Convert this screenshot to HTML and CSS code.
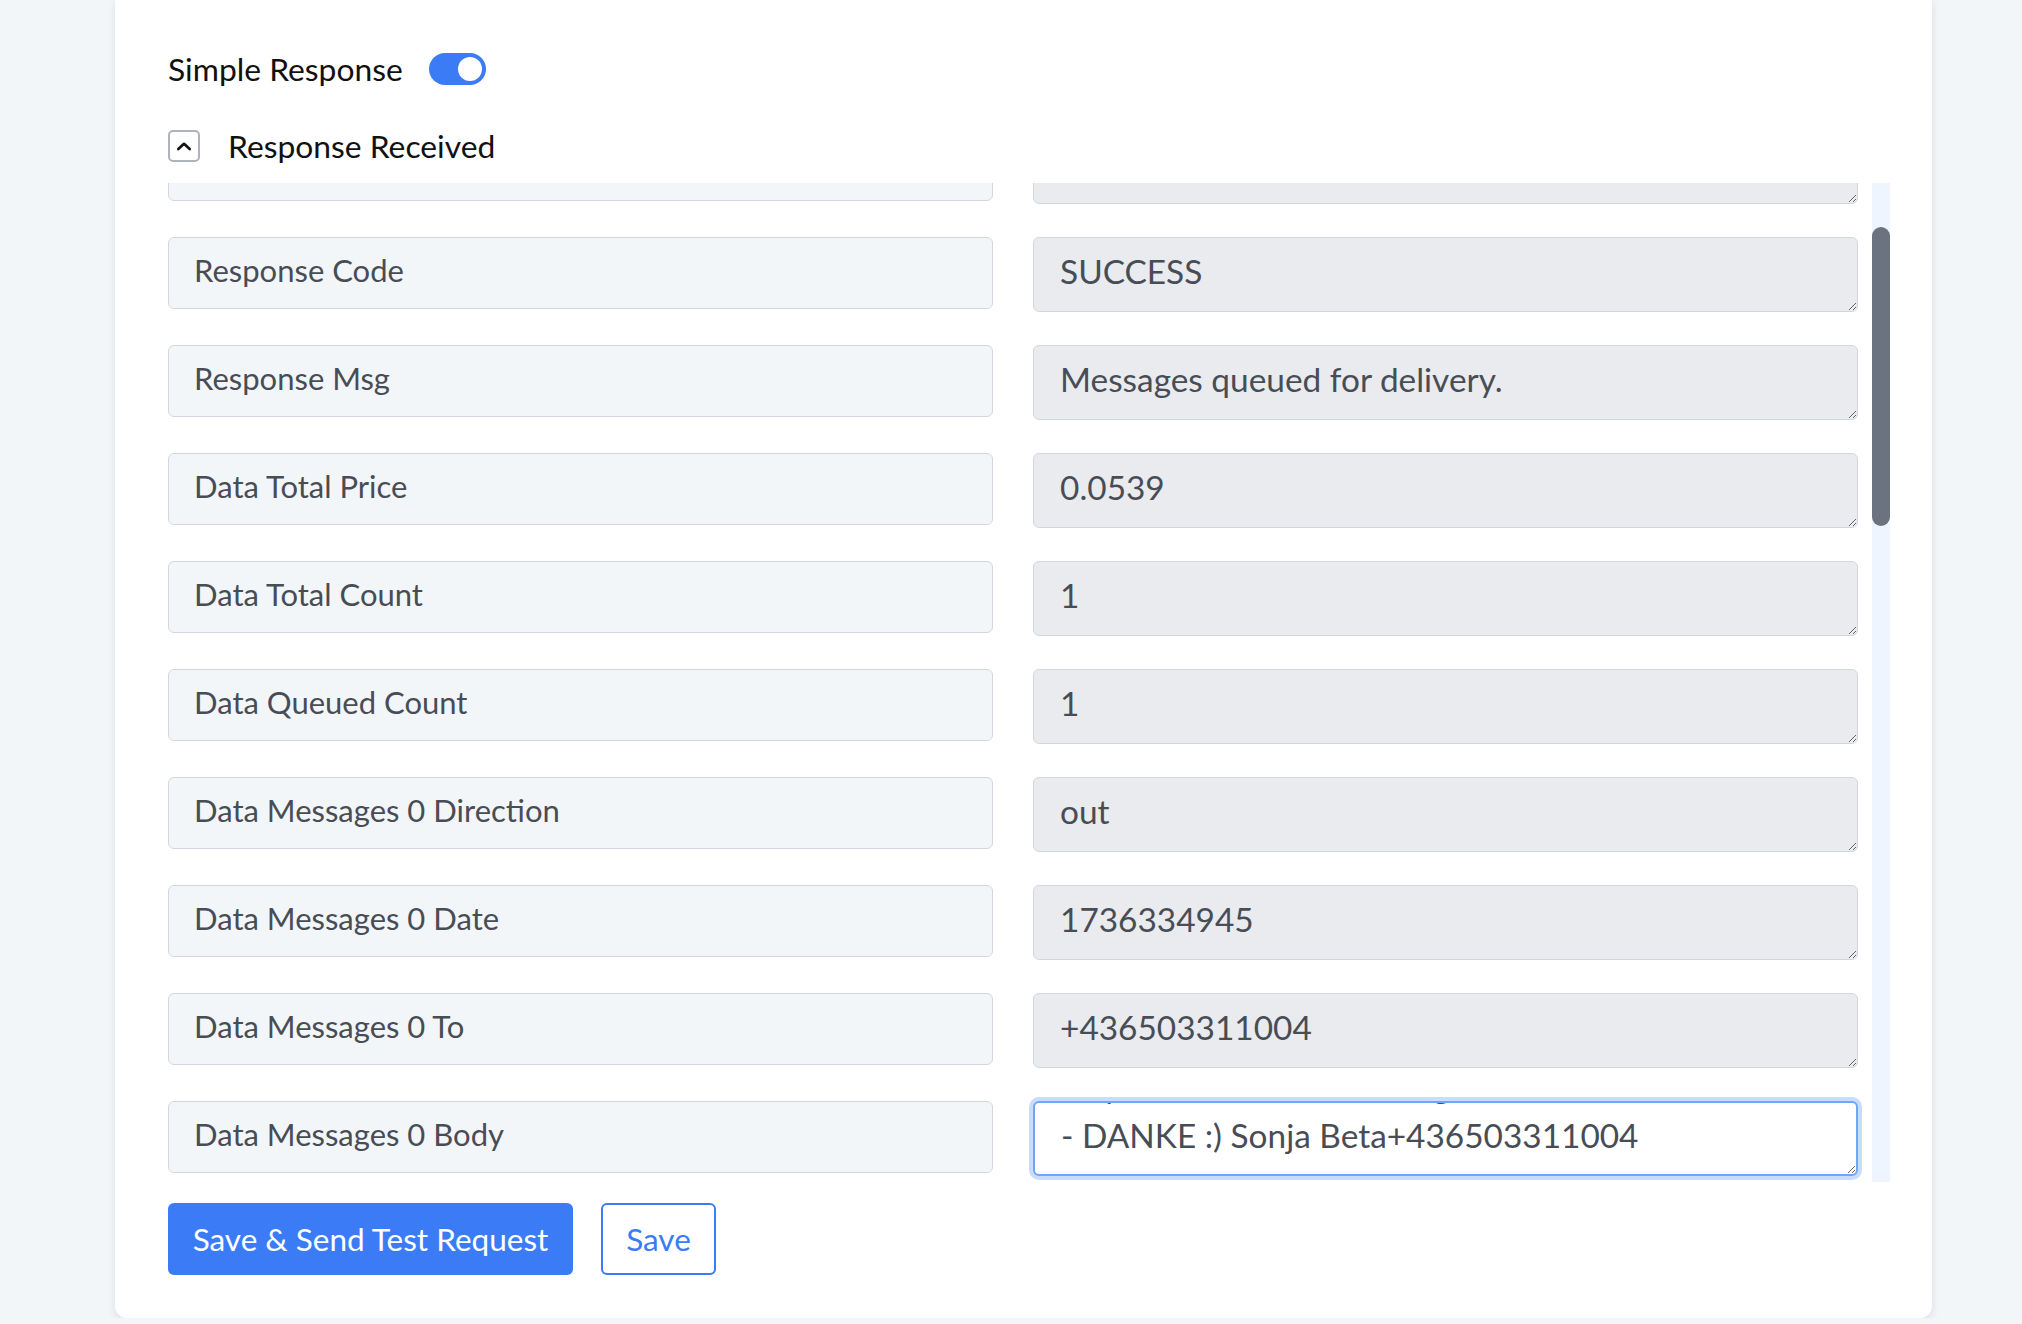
FILE: index.html
```html
<!DOCTYPE html>
<html lang="en">
<head>
    <meta charset="UTF-8">
    <meta name="viewport" content="width=device-width, initial-scale=1.0">
    <title>Webhook Response</title>
    <link rel="stylesheet" href="styles.css">
</head>
<body>

    <div class="card">
        <div class="toggle-row">
            <span class="title">Simple Response</span>
            <span class="switch"><span class="knob"></span></span>
        </div>

        <div class="section-head">
            <button class="collapse-btn" type="button">
                <svg width="32" height="32" viewBox="0 0 32 32">
                    <path d="M9.5 19.5 L16 13.5 L22.5 19.5" fill="none" stroke="#111" stroke-width="3" stroke-linecap="round" stroke-linejoin="round"/>
                </svg>
            </button>
            <span class="title">Response Received</span>
        </div>

        <div class="scroll-area">
            <div class="field-list">
                <div class="field-rows">
                    <div class="field-row">
                        <input class="field-key" type="text" value="Response Status" readonly>
                        <textarea class="field-value" rows="1" readonly>200</textarea>
                    </div>
                    <div class="field-row">
                        <input class="field-key" type="text" value="Response Code" readonly>
                        <textarea class="field-value" rows="1" readonly>SUCCESS</textarea>
                    </div>
                    <div class="field-row">
                        <input class="field-key" type="text" value="Response Msg" readonly>
                        <textarea class="field-value" rows="1" readonly>Messages queued for delivery.</textarea>
                    </div>
                    <div class="field-row">
                        <input class="field-key" type="text" value="Data Total Price" readonly>
                        <textarea class="field-value" rows="1" readonly>0.0539</textarea>
                    </div>
                    <div class="field-row">
                        <input class="field-key" type="text" value="Data Total Count" readonly>
                        <textarea class="field-value" rows="1" readonly>1</textarea>
                    </div>
                    <div class="field-row">
                        <input class="field-key" type="text" value="Data Queued Count" readonly>
                        <textarea class="field-value" rows="1" readonly>1</textarea>
                    </div>
                    <div class="field-row">
                        <input class="field-key" type="text" value="Data Messages 0 Direction" readonly>
                        <textarea class="field-value" rows="1" readonly>out</textarea>
                    </div>
                    <div class="field-row">
                        <input class="field-key" type="text" value="Data Messages 0 Date" readonly>
                        <textarea class="field-value" rows="1" readonly>1736334945</textarea>
                    </div>
                    <div class="field-row">
                        <input class="field-key" type="text" value="Data Messages 0 To" readonly>
                        <textarea class="field-value" rows="1" readonly>+436503311004</textarea>
                    </div>
                    <div class="field-row">
                        <input class="field-key" type="text" value="Data Messages 0 Body" readonly>
                        <textarea class="field-value active" id="bodyField" rows="1" readonly>Hey, Ihr Termin ist bestätigt, wir freuen uns auf Sie
- DANKE :) Sonja Beta+436503311004</textarea>
                    </div>
                </div>
            </div>
            <div class="scrollbar"><div class="thumb"></div></div>
        </div>

        <div class="actions">
            <button class="btn btn-primary" type="button">Save &amp; Send Test Request</button>
            <button class="btn btn-outline" type="button">Save</button>
        </div>
    </div>

    <script>
        // long message bodies stay scrolled to their last line
        var body = document.getElementById("bodyField");
        body.scrollTop = body.scrollHeight;
    </script>

</body>
</html>
```

FILE: styles.css
```css
body {
    margin: 0;
    background-color: #f3f6f9;
    font-family: Lato, "Liberation Sans", sans-serif;
    color: #111;
}
.card {
    margin-left: 115px;
    width: 1817px;
    box-sizing: border-box;
    padding: 53px 42px 43px 53px;
    background: white;
    border-radius: 0 0 12px 12px;
    box-shadow: 0 2px 8px rgba(30, 41, 59, 0.12);
}
.title {
    font-size: 31.8px;
    line-height: 32px;
}
.toggle-row {
    display: flex;
    align-items: center;
    gap: 26px;
    height: 32px;
}
.switch {
    display: flex;
    align-items: center;
    justify-content: flex-end;
    width: 57px;
    height: 32px;
    padding: 0 4px;
    box-sizing: border-box;
    border-radius: 16px;
    background: #3b7cf6;
}
.knob {
    width: 24px;
    height: 24px;
    border-radius: 50%;
    background: white;
}
.section-head {
    display: flex;
    align-items: center;
    gap: 28px;
    margin-top: 45px;
}
.collapse-btn {
    width: 32px;
    height: 32px;
    padding: 0;
    border: 2px solid #aeb3bc;
    border-radius: 5px;
    background: white;
    display: flex;
    align-items: center;
    justify-content: center;
}
.scroll-area {
    display: flex;
    height: 999px;
    margin-top: 21px;
}
.field-list {
    width: 1694px;
    padding-right: 4px;
    overflow: hidden;
}
.field-rows {
    display: flex;
    flex-direction: column;
    gap: 33px;
    margin-top: -54px;
}
.field-row {
    display: grid;
    grid-template-columns: 1fr 1fr;
    gap: 40px;
    align-items: start;
}
.field-key, .field-value {
    box-sizing: border-box;
    width: 100%;
    margin: 0;
    border: 1.5px solid #d3d7dd;
    border-radius: 6px;
    font-family: Lato, "Liberation Sans", sans-serif;
    color: #484d55;
    outline: none;
}
.field-key {
    height: 72px;
    padding: 0 25px 6px;
    background: #f3f6f9;
    font-size: 31px;
}
.field-value {
    height: 75px;
    padding: 8px 26px 14px;
    background: #e9ebef;
    font-size: 33.4px;
    line-height: 50px;
    resize: vertical;
    overflow: hidden;
}
.field-value.active {
    background: white;
    border: 2px solid #6ea7f7;
    box-shadow: 0 0 0 4px #c9dcfc;
}
.scrollbar {
    width: 18px;
    margin-left: 10px;
    background: #eef5ff;
}
.thumb {
    height: 299px;
    margin-top: 44px;
    border-radius: 9px;
    background: #6b7280;
}
.actions {
    display: flex;
    gap: 28px;
    margin-top: 21px;
}
.btn {
    height: 72px;
    padding: 0 20px;
    border-radius: 6px;
    font-family: Lato, "Liberation Sans", sans-serif;
    font-size: 31.5px;
    cursor: pointer;
}
.btn-primary {
    background: #3b7cf6;
    color: white;
    border: none;
    width: 405px;
}
.btn-outline {
    background: white;
    color: #3b7cf6;
    border: 2px solid #3b7cf6;
    width: 115px;
}
```
